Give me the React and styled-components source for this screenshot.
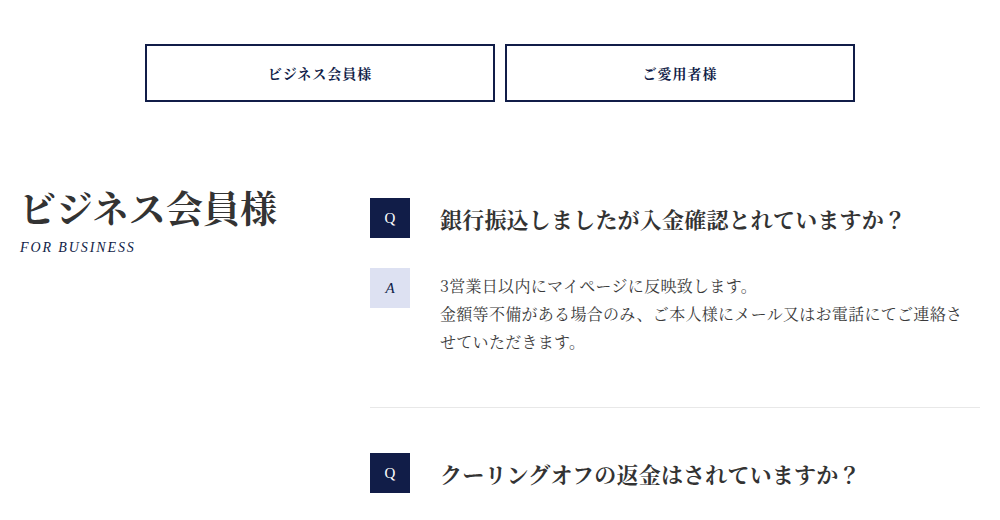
import styled, { createGlobalStyle } from "styled-components";

const GlobalStyle = createGlobalStyle`
  body {
    margin: 0;
    background: #fff;
    font-family: "Noto Serif CJK JP", "Liberation Serif", "Noto Sans CJK JP", serif;
    color: #333;
  }
`;

const navy = "#111d48";
const jp = `"Noto Serif CJK JP", "Liberation Serif", "Noto Sans CJK JP", serif`;

const faqs = [
  {
    q: "銀行振込しましたが入金確認とれていますか？",
    a: [
      "3営業日以内にマイページに反映致します。",
      "金額等不備がある場合のみ、ご本人様にメール又はお電話にてご連絡させていただきます。",
    ],
  },
  {
    q: "クーリングオフの返金はされていますか？",
    a: ["お手続き完了後、順次ご返金させていただきます。"],
  },
];

const Page = styled.div`
  width: 1000px;
  height: 520px;
  overflow: hidden;
  padding-top: 44px;
  box-sizing: border-box;
`;

const Tabs = styled.nav`
  display: flex;
  justify-content: center;
  gap: 10px;
`;

const Tab = styled.a`
  width: 350px;
  height: 58px;
  box-sizing: border-box;
  border: 2px solid ${navy};
  display: flex;
  align-items: center;
  justify-content: center;
  font-family: ${jp};
  font-size: 14px;
  font-weight: 700;
  letter-spacing: 1px;
  color: ${navy};
  cursor: pointer;
`;

const Section = styled.section`
  display: flex;
  margin-top: 82px;
`;

const Side = styled.div`
  width: 370px;
  padding-left: 19px;
  box-sizing: border-box;
`;

const Title = styled.h2`
  margin: 0;
  font-family: ${jp};
  font-size: 37px;
  font-weight: 700;
  line-height: 46px;
  color: #333;
`;

const Sub = styled.p`
  margin: 10px 0 0;
  padding-left: 1px;
  font-family: "Liberation Serif", serif;
  font-style: italic;
  font-size: 14px;
  letter-spacing: 1.9px;
  color: ${navy};
`;

const List = styled.div`
  width: 610px;
  padding-top: 14px;
`;

const Item = styled.div`
  padding-bottom: 51px;
  margin-bottom: 45px;
  border-bottom: 1px solid #e8e8e8;
`;

const Row = styled.div`
  display: flex;
  align-items: ${(p) => (p.$top ? "flex-start" : "center")};
  gap: 30px;
  margin-top: ${(p) => (p.$top ? "30px" : "0")};
`;

const Badge = styled.span`
  flex: none;
  width: 40px;
  height: 40px;
  display: flex;
  align-items: center;
  justify-content: center;
  background: ${(p) => (p.$answer ? "#dde1f2" : navy)};
  color: ${(p) => (p.$answer ? navy : "#fff")};
  font-family: "Liberation Serif", serif;
  font-style: ${(p) => (p.$answer ? "italic" : "normal")};
  font-size: 15px;
`;

const Question = styled.h3`
  margin: 0;
  font-family: ${jp};
  font-size: 22px;
  font-weight: 700;
  letter-spacing: 0.2px;
  color: #333;
`;

const Answer = styled.div`
  margin-top: 4px;
  font-family: ${jp};
  font-size: 16px;
  line-height: 28px;
  letter-spacing: 0.3px;
  color: #3a3a3a;
  width: 530px;
  p {
    margin: 0;
  }
`;

export default function App() {
  return (
    <Page>
      <GlobalStyle />
      <Tabs>
        <Tab>ビジネス会員様</Tab>
        <Tab>ご愛用者様</Tab>
      </Tabs>
      <Section>
        <Side>
          <Title>ビジネス会員様</Title>
          <Sub>FOR BUSINESS</Sub>
        </Side>
        <List>
          {faqs.map((f) => (
            <Item key={f.q}>
              <Row>
                <Badge>Q</Badge>
                <Question>{f.q}</Question>
              </Row>
              <Row $top>
                <Badge $answer>A</Badge>
                <Answer>
                  {f.a.map((line) => (
                    <p key={line}>{line}</p>
                  ))}
                </Answer>
              </Row>
            </Item>
          ))}
        </List>
      </Section>
    </Page>
  );
}
